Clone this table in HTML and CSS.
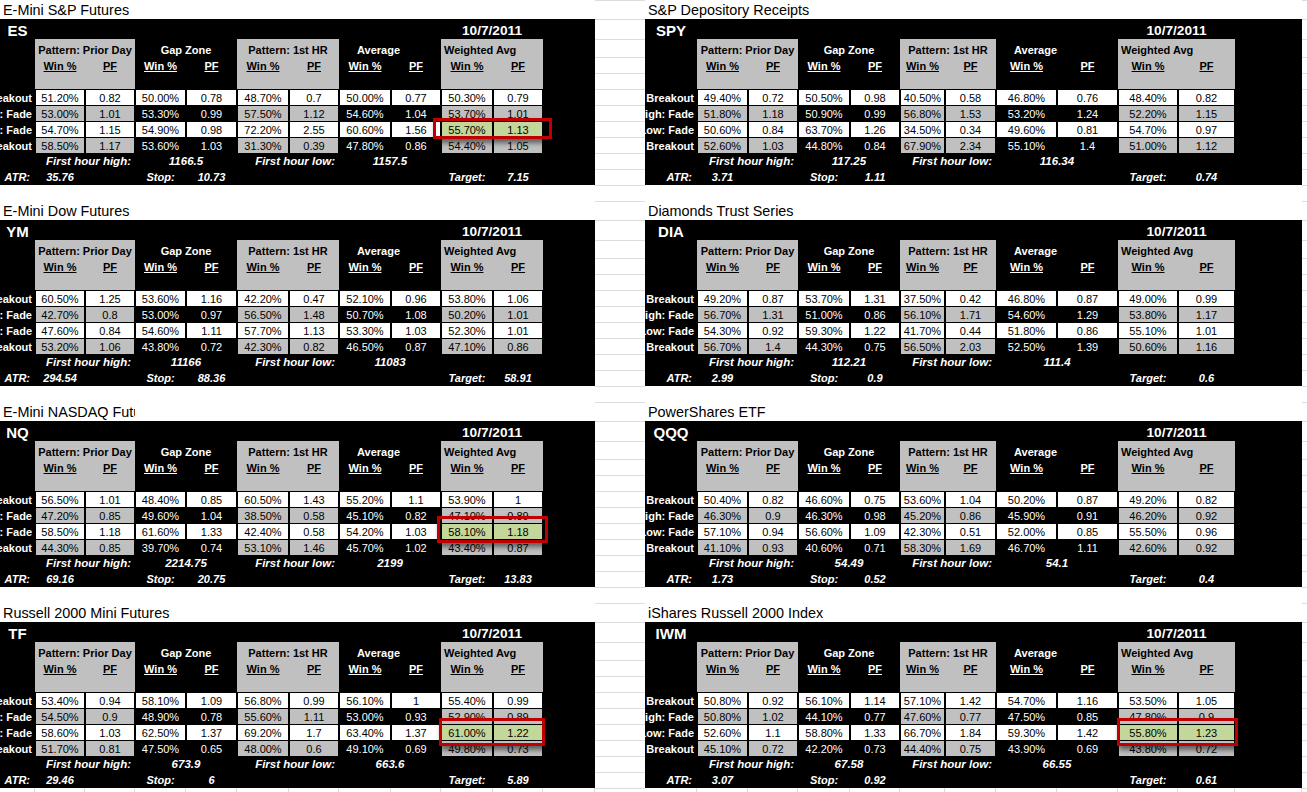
FILE: index.html
```html
<!DOCTYPE html>
<html lang="en">
<head>
<meta charset="utf-8">
<title>Index futures pattern statistics</title>
<link rel="stylesheet" href="styles.css">
</head>
<body>
<div class="sheet">

  <div class="band">
    <div class="panel pl">
      <div class="title">E-Mini S&amp;P Futures</div>
      <div class="row tk"><span class="sym">ES</span><span class="date">10/7/2011</span></div>
      <div class="row h1"><span class="st g">Pattern: Prior Day</span><span>Gap Zone</span><span class="g">Pattern: 1st HR</span><span class="avg">Average</span><span class="g wa">Weighted Avg</span></div>
      <div class="row h2"><u class="st g">Win %</u><u class="g">PF</u><u>Win %</u><u>PF</u><u class="g">Win %</u><u class="g">PF</u><u>Win %</u><u>PF</u><u class="g">Win %</u><u class="g">PF</u></div>
      <div class="row h3"><span class="st g"></span><span></span><span class="g"></span><span></span><span class="g"></span></div>
      <div class="row d lt"><span class="lab"><span>Breakout</span></span><span>51.20%</span><span>0.82</span><span>50.00%</span><span>0.78</span><span>48.70%</span><span>0.7</span><span>50.00%</span><span>0.77</span><span>50.30%</span><span>0.79</span></div>
      <div class="row d dk"><span class="lab"><span>High: Fade</span></span><span>53.00%</span><span>1.01</span><span>53.30%</span><span>0.99</span><span>57.50%</span><span>1.12</span><span>54.60%</span><span>1.04</span><span>53.70%</span><span>1.01</span></div>
      <div class="row d lt"><span class="lab"><span>Low: Fade</span></span><span>54.70%</span><span>1.15</span><span>54.90%</span><span>0.98</span><span>72.20%</span><span>2.55</span><span>60.60%</span><span>1.56</span><span class="hl">55.70%</span><span class="hl">1.13</span></div>
      <div class="row d dk"><span class="lab"><span>Breakout</span></span><span>58.50%</span><span>1.17</span><span>53.60%</span><span>1.03</span><span>31.30%</span><span>0.39</span><span>47.80%</span><span>0.86</span><span>54.40%</span><span>1.05</span></div>
      <div class="row f"><span class="st fl">First hour high:</span><span>1166.5</span><span class="fl">First hour low:</span><span>1157.5</span></div>
      <div class="row a"><span class="al">ATR:</span><span>35.76</span><span class="c4">Stop:</span><span>10.73</span><span class="c10">Target:</span><span>7.15</span></div>
      <div class="blank"></div>
      <div class="mk mk-es"></div>
    </div>
    <div class="panel pr">
      <div class="title">S&amp;P Depository Receipts</div>
      <div class="row tk"><span class="sym">SPY</span><span class="date">10/7/2011</span></div>
      <div class="row h1"><span class="st g">Pattern: Prior Day</span><span>Gap Zone</span><span class="g">Pattern: 1st HR</span><span class="avg">Average</span><span class="g wa">Weighted Avg</span></div>
      <div class="row h2"><u class="st g">Win %</u><u class="g">PF</u><u>Win %</u><u>PF</u><u class="g">Win %</u><u class="g">PF</u><u>Win %</u><u>PF</u><u class="g">Win %</u><u class="g">PF</u></div>
      <div class="row h3"><span class="st g"></span><span></span><span class="g"></span><span></span><span class="g"></span></div>
      <div class="row d lt"><span class="lab"><span>Breakout</span></span><span>49.40%</span><span>0.72</span><span>50.50%</span><span>0.98</span><span>40.50%</span><span>0.58</span><span>46.80%</span><span>0.76</span><span>48.40%</span><span>0.82</span></div>
      <div class="row d dk"><span class="lab"><span>High: Fade</span></span><span>51.80%</span><span>1.18</span><span>50.90%</span><span>0.99</span><span>56.80%</span><span>1.53</span><span>53.20%</span><span>1.24</span><span>52.20%</span><span>1.15</span></div>
      <div class="row d lt"><span class="lab"><span>Low: Fade</span></span><span>50.60%</span><span>0.84</span><span>63.70%</span><span>1.26</span><span>34.50%</span><span>0.34</span><span>49.60%</span><span>0.81</span><span>54.70%</span><span>0.97</span></div>
      <div class="row d dk"><span class="lab"><span>Breakout</span></span><span>52.60%</span><span>1.03</span><span>44.80%</span><span>0.84</span><span>67.90%</span><span>2.34</span><span>55.10%</span><span>1.4</span><span>51.00%</span><span>1.12</span></div>
      <div class="row f"><span class="st fl">First hour high:</span><span>117.25</span><span class="fl">First hour low:</span><span>116.34</span></div>
      <div class="row a"><span class="al">ATR:</span><span>3.71</span><span class="c4">Stop:</span><span>1.11</span><span class="c10">Target:</span><span>0.74</span></div>
      <div class="blank"></div>
    </div>
  </div>

  <div class="band">
    <div class="panel pl">
      <div class="title">E-Mini Dow Futures</div>
      <div class="row tk"><span class="sym">YM</span><span class="date">10/7/2011</span></div>
      <div class="row h1"><span class="st g">Pattern: Prior Day</span><span>Gap Zone</span><span class="g">Pattern: 1st HR</span><span class="avg">Average</span><span class="g wa">Weighted Avg</span></div>
      <div class="row h2"><u class="st g">Win %</u><u class="g">PF</u><u>Win %</u><u>PF</u><u class="g">Win %</u><u class="g">PF</u><u>Win %</u><u>PF</u><u class="g">Win %</u><u class="g">PF</u></div>
      <div class="row h3"><span class="st g"></span><span></span><span class="g"></span><span></span><span class="g"></span></div>
      <div class="row d lt"><span class="lab"><span>Breakout</span></span><span>60.50%</span><span>1.25</span><span>53.60%</span><span>1.16</span><span>42.20%</span><span>0.47</span><span>52.10%</span><span>0.96</span><span>53.80%</span><span>1.06</span></div>
      <div class="row d dk"><span class="lab"><span>High: Fade</span></span><span>42.70%</span><span>0.8</span><span>53.00%</span><span>0.97</span><span>56.50%</span><span>1.48</span><span>50.70%</span><span>1.08</span><span>50.20%</span><span>1.01</span></div>
      <div class="row d lt"><span class="lab"><span>Low: Fade</span></span><span>47.60%</span><span>0.84</span><span>54.60%</span><span>1.11</span><span>57.70%</span><span>1.13</span><span>53.30%</span><span>1.03</span><span>52.30%</span><span>1.01</span></div>
      <div class="row d dk"><span class="lab"><span>Breakout</span></span><span>53.20%</span><span>1.06</span><span>43.80%</span><span>0.72</span><span>42.30%</span><span>0.82</span><span>46.50%</span><span>0.87</span><span>47.10%</span><span>0.86</span></div>
      <div class="row f"><span class="st fl">First hour high:</span><span>11166</span><span class="fl">First hour low:</span><span>11083</span></div>
      <div class="row a"><span class="al">ATR:</span><span>294.54</span><span class="c4">Stop:</span><span>88.36</span><span class="c10">Target:</span><span>58.91</span></div>
      <div class="blank"></div>
    </div>
    <div class="panel pr">
      <div class="title">Diamonds Trust Series</div>
      <div class="row tk"><span class="sym">DIA</span><span class="date">10/7/2011</span></div>
      <div class="row h1"><span class="st g">Pattern: Prior Day</span><span>Gap Zone</span><span class="g">Pattern: 1st HR</span><span class="avg">Average</span><span class="g wa">Weighted Avg</span></div>
      <div class="row h2"><u class="st g">Win %</u><u class="g">PF</u><u>Win %</u><u>PF</u><u class="g">Win %</u><u class="g">PF</u><u>Win %</u><u>PF</u><u class="g">Win %</u><u class="g">PF</u></div>
      <div class="row h3"><span class="st g"></span><span></span><span class="g"></span><span></span><span class="g"></span></div>
      <div class="row d lt"><span class="lab"><span>Breakout</span></span><span>49.20%</span><span>0.87</span><span>53.70%</span><span>1.31</span><span>37.50%</span><span>0.42</span><span>46.80%</span><span>0.87</span><span>49.00%</span><span>0.99</span></div>
      <div class="row d dk"><span class="lab"><span>High: Fade</span></span><span>56.70%</span><span>1.31</span><span>51.00%</span><span>0.86</span><span>56.10%</span><span>1.71</span><span>54.60%</span><span>1.29</span><span>53.80%</span><span>1.17</span></div>
      <div class="row d lt"><span class="lab"><span>Low: Fade</span></span><span>54.30%</span><span>0.92</span><span>59.30%</span><span>1.22</span><span>41.70%</span><span>0.44</span><span>51.80%</span><span>0.86</span><span>55.10%</span><span>1.01</span></div>
      <div class="row d dk"><span class="lab"><span>Breakout</span></span><span>56.70%</span><span>1.4</span><span>44.30%</span><span>0.75</span><span>56.50%</span><span>2.03</span><span>52.50%</span><span>1.39</span><span>50.60%</span><span>1.16</span></div>
      <div class="row f"><span class="st fl">First hour high:</span><span>112.21</span><span class="fl">First hour low:</span><span>111.4</span></div>
      <div class="row a"><span class="al">ATR:</span><span>2.99</span><span class="c4">Stop:</span><span>0.9</span><span class="c10">Target:</span><span>0.6</span></div>
      <div class="blank"></div>
    </div>
  </div>

  <div class="band">
    <div class="panel pl">
      <div class="title"><span class="clip">E-Mini NASDAQ Futures</span></div>
      <div class="row tk"><span class="sym">NQ</span><span class="date">10/7/2011</span></div>
      <div class="row h1"><span class="st g">Pattern: Prior Day</span><span>Gap Zone</span><span class="g">Pattern: 1st HR</span><span class="avg">Average</span><span class="g wa">Weighted Avg</span></div>
      <div class="row h2"><u class="st g">Win %</u><u class="g">PF</u><u>Win %</u><u>PF</u><u class="g">Win %</u><u class="g">PF</u><u>Win %</u><u>PF</u><u class="g">Win %</u><u class="g">PF</u></div>
      <div class="row h3"><span class="st g"></span><span></span><span class="g"></span><span></span><span class="g"></span></div>
      <div class="row d lt"><span class="lab"><span>Breakout</span></span><span>56.50%</span><span>1.01</span><span>48.40%</span><span>0.85</span><span>60.50%</span><span>1.43</span><span>55.20%</span><span>1.1</span><span>53.90%</span><span>1</span></div>
      <div class="row d dk"><span class="lab"><span>High: Fade</span></span><span>47.20%</span><span>0.85</span><span>49.60%</span><span>1.04</span><span>38.50%</span><span>0.58</span><span>45.10%</span><span>0.82</span><span>47.10%</span><span>0.89</span></div>
      <div class="row d lt"><span class="lab"><span>Low: Fade</span></span><span>58.50%</span><span>1.18</span><span>61.60%</span><span>1.33</span><span>42.40%</span><span>0.58</span><span>54.20%</span><span>1.03</span><span class="hl">58.10%</span><span class="hl">1.18</span></div>
      <div class="row d dk"><span class="lab"><span>Breakout</span></span><span>44.30%</span><span>0.85</span><span>39.70%</span><span>0.74</span><span>53.10%</span><span>1.46</span><span>45.70%</span><span>1.02</span><span>43.40%</span><span>0.87</span></div>
      <div class="row f"><span class="st fl">First hour high:</span><span>2214.75</span><span class="fl">First hour low:</span><span>2199</span></div>
      <div class="row a"><span class="al">ATR:</span><span>69.16</span><span class="c4">Stop:</span><span>20.75</span><span class="c10">Target:</span><span>13.83</span></div>
      <div class="blank"></div>
      <div class="mk mk-nq"></div>
    </div>
    <div class="panel pr">
      <div class="title">PowerShares ETF</div>
      <div class="row tk"><span class="sym">QQQ</span><span class="date">10/7/2011</span></div>
      <div class="row h1"><span class="st g">Pattern: Prior Day</span><span>Gap Zone</span><span class="g">Pattern: 1st HR</span><span class="avg">Average</span><span class="g wa">Weighted Avg</span></div>
      <div class="row h2"><u class="st g">Win %</u><u class="g">PF</u><u>Win %</u><u>PF</u><u class="g">Win %</u><u class="g">PF</u><u>Win %</u><u>PF</u><u class="g">Win %</u><u class="g">PF</u></div>
      <div class="row h3"><span class="st g"></span><span></span><span class="g"></span><span></span><span class="g"></span></div>
      <div class="row d lt"><span class="lab"><span>Breakout</span></span><span>50.40%</span><span>0.82</span><span>46.60%</span><span>0.75</span><span>53.60%</span><span>1.04</span><span>50.20%</span><span>0.87</span><span>49.20%</span><span>0.82</span></div>
      <div class="row d dk"><span class="lab"><span>High: Fade</span></span><span>46.30%</span><span>0.9</span><span>46.30%</span><span>0.98</span><span>45.20%</span><span>0.86</span><span>45.90%</span><span>0.91</span><span>46.20%</span><span>0.92</span></div>
      <div class="row d lt"><span class="lab"><span>Low: Fade</span></span><span>57.10%</span><span>0.94</span><span>56.60%</span><span>1.09</span><span>42.30%</span><span>0.51</span><span>52.00%</span><span>0.85</span><span>55.50%</span><span>0.96</span></div>
      <div class="row d dk"><span class="lab"><span>Breakout</span></span><span>41.10%</span><span>0.93</span><span>40.60%</span><span>0.71</span><span>58.30%</span><span>1.69</span><span>46.70%</span><span>1.11</span><span>42.60%</span><span>0.92</span></div>
      <div class="row f"><span class="st fl">First hour high:</span><span>54.49</span><span class="fl">First hour low:</span><span>54.1</span></div>
      <div class="row a"><span class="al">ATR:</span><span>1.73</span><span class="c4">Stop:</span><span>0.52</span><span class="c10">Target:</span><span>0.4</span></div>
      <div class="blank"></div>
    </div>
  </div>

  <div class="band">
    <div class="panel pl">
      <div class="title">Russell 2000 Mini Futures</div>
      <div class="row tk"><span class="sym">TF</span><span class="date">10/7/2011</span></div>
      <div class="row h1"><span class="st g">Pattern: Prior Day</span><span>Gap Zone</span><span class="g">Pattern: 1st HR</span><span class="avg">Average</span><span class="g wa">Weighted Avg</span></div>
      <div class="row h2"><u class="st g">Win %</u><u class="g">PF</u><u>Win %</u><u>PF</u><u class="g">Win %</u><u class="g">PF</u><u>Win %</u><u>PF</u><u class="g">Win %</u><u class="g">PF</u></div>
      <div class="row h3"><span class="st g"></span><span></span><span class="g"></span><span></span><span class="g"></span></div>
      <div class="row d lt"><span class="lab"><span>Breakout</span></span><span>53.40%</span><span>0.94</span><span>58.10%</span><span>1.09</span><span>56.80%</span><span>0.99</span><span>56.10%</span><span>1</span><span>55.40%</span><span>0.99</span></div>
      <div class="row d dk"><span class="lab"><span>High: Fade</span></span><span>54.50%</span><span>0.9</span><span>48.90%</span><span>0.78</span><span>55.60%</span><span>1.11</span><span>53.00%</span><span>0.93</span><span>52.90%</span><span>0.89</span></div>
      <div class="row d lt"><span class="lab"><span>Low: Fade</span></span><span>58.60%</span><span>1.03</span><span>62.50%</span><span>1.37</span><span>69.20%</span><span>1.7</span><span>63.40%</span><span>1.37</span><span class="hl">61.00%</span><span class="hl">1.22</span></div>
      <div class="row d dk"><span class="lab"><span>Breakout</span></span><span>51.70%</span><span>0.81</span><span>47.50%</span><span>0.65</span><span>48.00%</span><span>0.6</span><span>49.10%</span><span>0.69</span><span>49.80%</span><span>0.73</span></div>
      <div class="row f"><span class="st fl">First hour high:</span><span>673.9</span><span class="fl">First hour low:</span><span>663.6</span></div>
      <div class="row a"><span class="al">ATR:</span><span>29.46</span><span class="c4">Stop:</span><span>6</span><span class="c10">Target:</span><span>5.89</span></div>
      <div class="blank gl"><span></span><span></span><span></span><span></span><span></span><span></span><span></span><span></span><span></span><span></span><span></span><span></span></div>
      <div class="mk mk-tf"></div>
    </div>
    <div class="panel pr">
      <div class="title">iShares Russell 2000 Index</div>
      <div class="row tk"><span class="sym">IWM</span><span class="date">10/7/2011</span></div>
      <div class="row h1"><span class="st g">Pattern: Prior Day</span><span>Gap Zone</span><span class="g">Pattern: 1st HR</span><span class="avg">Average</span><span class="g wa">Weighted Avg</span></div>
      <div class="row h2"><u class="st g">Win %</u><u class="g">PF</u><u>Win %</u><u>PF</u><u class="g">Win %</u><u class="g">PF</u><u>Win %</u><u>PF</u><u class="g">Win %</u><u class="g">PF</u></div>
      <div class="row h3"><span class="st g"></span><span></span><span class="g"></span><span></span><span class="g"></span></div>
      <div class="row d lt"><span class="lab"><span>Breakout</span></span><span>50.80%</span><span>0.92</span><span>56.10%</span><span>1.14</span><span>57.10%</span><span>1.42</span><span>54.70%</span><span>1.16</span><span>53.50%</span><span>1.05</span></div>
      <div class="row d dk"><span class="lab"><span>High: Fade</span></span><span>50.80%</span><span>1.02</span><span>44.10%</span><span>0.77</span><span>47.60%</span><span>0.77</span><span>47.50%</span><span>0.85</span><span>47.80%</span><span>0.9</span></div>
      <div class="row d lt"><span class="lab"><span>Low: Fade</span></span><span>52.60%</span><span>1.1</span><span>58.80%</span><span>1.33</span><span>66.70%</span><span>1.84</span><span>59.30%</span><span>1.42</span><span class="hl">55.80%</span><span class="hl">1.23</span></div>
      <div class="row d dk"><span class="lab"><span>Breakout</span></span><span>45.10%</span><span>0.72</span><span>42.20%</span><span>0.73</span><span>44.40%</span><span>0.75</span><span>43.90%</span><span>0.69</span><span>43.80%</span><span>0.72</span></div>
      <div class="row f"><span class="st fl">First hour high:</span><span>67.58</span><span class="fl">First hour low:</span><span>66.55</span></div>
      <div class="row a"><span class="al">ATR:</span><span>3.07</span><span class="c4">Stop:</span><span>0.92</span><span class="c10">Target:</span><span>0.61</span></div>
      <div class="blank gl"><span></span><span></span><span></span><span></span><span></span><span></span><span></span><span></span><span></span><span></span><span></span><span></span></div>
      <div class="mk mk-iwm"></div>
    </div>
  </div>

</div>
</body>
</html>
```

FILE: styles.css
```css
* { box-sizing: border-box; }

html, body {
  margin: 0;
  padding: 0;
  background: #fff;
}

body {
  font-family: "Liberation Sans", Arial, sans-serif;
  font-size: 11px;
  color: #000;
}

.sheet {
  width: 1307px;
  height: 792px;
  overflow: hidden;
}

/* one band = one pair of panels, with the spreadsheet gridlines behind */
.band {
  --gl: #dadcdd;
  display: flex;
  gap: 50px;
  height: 201px;
  background-image:
    linear-gradient(var(--gl), var(--gl)),
    linear-gradient(var(--gl), var(--gl)),
    linear-gradient(var(--gl), var(--gl)),
    linear-gradient(var(--gl), var(--gl)),
    linear-gradient(var(--gl), var(--gl)),
    linear-gradient(var(--gl), var(--gl)),
    linear-gradient(var(--gl), var(--gl)),
    linear-gradient(var(--gl), var(--gl)),
    linear-gradient(var(--gl), var(--gl)),
    linear-gradient(var(--gl), var(--gl)),
    linear-gradient(var(--gl), var(--gl)),
    linear-gradient(var(--gl), var(--gl));
  background-size: 100% 1px;
  background-repeat: no-repeat;
  background-position:
    0 0, 0 19px, 0 39px, 0 57px, 0 73px, 0 89px,
    0 105px, 0 121px, 0 137px, 0 153px, 0 169px, 0 185px;
}

.panel {
  position: relative;
  flex: none;
  display: flex;
  flex-direction: column;
  background: #000;
}

.pl {
  width: 595px;
  --cols: 35px 50px 50px 51px 51px 52px 50px 52px 50px 52px 50px 52px;
}

.pr {
  width: 657px;
  --cols: 52px 51px 50px 52px 50px 45px 51px 61px 61px 60px 57px 67px;
}

.title {
  flex: none;
  height: 19px;
  background: #fff;
  font-size: 14.4px;
  line-height: 18px;
  padding: 1px 0 0 3px;
  white-space: nowrap;
}

.clip {
  display: inline-block;
  max-width: 132px;
  overflow: hidden;
  vertical-align: top;
}

.row {
  flex: none;
  display: grid;
  grid-template-columns: var(--cols);
  color: #fff;
  font-weight: bold;
}

/* ticker + date */
.tk { height: 20px; }

.sym {
  grid-column: 1;
  text-align: center;
  font-size: 15px;
  line-height: 17px;
  padding-top: 3px;
}

.date {
  grid-column: 10 / span 2;
  text-align: center;
  font-size: 13.7px;
  line-height: 17px;
  padding-top: 3px;
}

.g {
  background: #c0c0c0;
  color: #000;
}

/* header rows */
.h1 { height: 18px; }

.h1 > span {
  grid-column: span 2;
  text-align: center;
  line-height: 14px;
  padding-top: 4px;
  white-space: nowrap;
}

.h1 > .st,
.h3 > .st { grid-column: 2 / span 2; }

.h1 > .avg {
  text-align: left;
  padding-left: 18px;
}

.h1 > .wa {
  text-align: left;
  padding-left: 3px;
}

.h2 { height: 16px; }

.h2 > u {
  text-align: center;
  line-height: 14px;
  padding-top: 2px;
}

.h2 > .st { grid-column-start: 2; }

.h3 { height: 16px; }

.h3 > span { grid-column: span 2; }

/* data rows */
.d {
  height: 16px;
  font-weight: normal;
}

.d > span {
  line-height: 14px;
  padding-top: 1px;
  text-align: center;
  border: 1px solid #000;
  white-space: nowrap;
}

.d > .lab {
  border: 0;
  padding: 2px 3px 0 0;
  display: flex;
  justify-content: flex-end;
  overflow: hidden;
  font-weight: bold;
  color: #fff;
}

.lab > span {
  flex-shrink: 0;
  white-space: nowrap;
}

.lt > span:not(.lab) {
  background: #fff;
  color: #000;
}

.dk > span:not(.lab) {
  background: #c0c0c0;
  color: #000;
}

.dk > span:nth-child(4),
.dk > span:nth-child(5),
.dk > span:nth-child(8),
.dk > span:nth-child(9) {
  background: transparent;
  color: #fff;
}

.d.lt > span.hl { background: #c4d79b; }

/* footer rows */
.f, .a {
  height: 16px;
  font-style: italic;
}

.f { font-size: 11.5px; }

.f > span, .a > span {
  line-height: 14px;
  padding-top: 1px;
  text-align: center;
  white-space: nowrap;
}

.f > span { grid-column: span 2; }

.f > .st { grid-column: 2 / span 2; }

.f > .fl {
  text-align: right;
  padding-right: 4px;
}

.a > .al {
  text-align: right;
  padding-right: 5px;
}

.a > .c4 { grid-column-start: 4; }

.a > .c10 { grid-column-start: 10; }

.blank {
  flex: none;
  height: 16px;
  background: #fff;
}

.blank.gl {
  display: grid;
  grid-template-columns: var(--cols);
}

.gl > span { border-right: 1px solid #dadcdd; }

/* red highlight frames drawn over the weighted-average cells */
.mk {
  position: absolute;
  border: 3px solid #c00000;
  box-shadow: 2px 4px 5px rgba(0, 0, 0, 0.5);
}

.mk-es  { left: 433px; top: 118px; width: 119px; height: 21px; }
.mk-nq  { left: 437px; top: 114px; width: 111px; height: 27px; }
.mk-tf  { left: 439px; top: 115px; width: 106px; height: 28px; }
.mk-iwm { left: 472px; top: 115px; width: 121px; height: 28px; }
```
